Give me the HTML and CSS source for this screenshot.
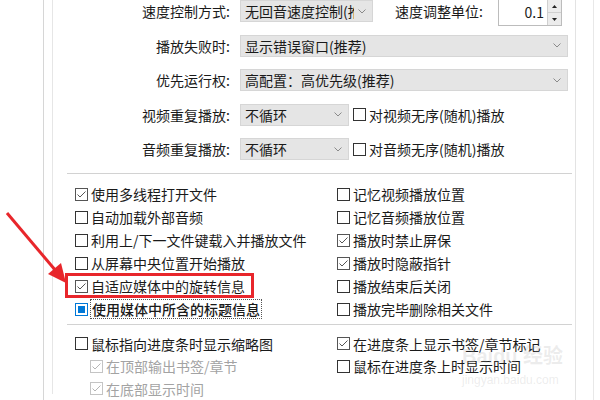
FILE: index.html
```html
<!DOCTYPE html>
<html lang="zh-CN">
<head>
    <meta charset="UTF-8">
    <title>播放设置</title>
    <link rel="stylesheet" href="styles.css">
</head>
<body>
    <div class="window">
        <div class="gutter"></div>
        <div class="pane">
            <div class="content">
                <div class="options">
                    <div class="row">
                        <span class="label">速度控制方式:</span>
                        <div class="select short"><span class="value">无回音速度控制(推荐)</span><svg class="chev" viewBox="0 0 8 5"><polyline points="0.5,0.5 4,4 7.5,0.5"/></svg></div>
                        <span class="spin-label">速度调整单位:</span>
                        <div class="spin">
                            <span class="spin-value">0.1</span>
                            <div class="spin-btns">
                                <span class="spin-btn"><svg viewBox="0 0 5 3"><polygon points="2.5,0 5,3 0,3"/></svg></span>
                                <span class="spin-btn"><svg viewBox="0 0 5 3"><polygon points="0,0 5,0 2.5,3"/></svg></span>
                            </div>
                        </div>
                    </div>
                    <div class="row">
                        <span class="label">播放失败时:</span>
                        <div class="select wide"><span class="value">显示错误窗口(推荐)</span><svg class="chev" viewBox="0 0 8 5"><polyline points="0.5,0.5 4,4 7.5,0.5"/></svg></div>
                    </div>
                    <div class="row">
                        <span class="label">优先运行权:</span>
                        <div class="select wide"><span class="value">高配置：高优先级(推荐)</span><svg class="chev" viewBox="0 0 8 5"><polyline points="0.5,0.5 4,4 7.5,0.5"/></svg></div>
                    </div>
                    <div class="row">
                        <span class="label">视频重复播放:</span>
                        <div class="select tiny"><span class="value">不循环</span><svg class="chev" viewBox="0 0 8 5"><polyline points="0.5,0.5 4,4 7.5,0.5"/></svg></div>
                        <label class="check inline"><span class="box"></span>对视频无序(随机)播放</label>
                    </div>
                    <div class="row">
                        <span class="label">音频重复播放:</span>
                        <div class="select tiny"><span class="value">不循环</span><svg class="chev" viewBox="0 0 8 5"><polyline points="0.5,0.5 4,4 7.5,0.5"/></svg></div>
                        <label class="check inline"><span class="box"></span>对音频无序(随机)播放</label>
                    </div>
                </div>

                <div class="sep first"></div>

                <div class="checks">
                    <label class="check"><span class="box on"><svg viewBox="0 0 11 11"><polyline points="1.5,5.5 4,8 9.5,2.5"/></svg></span>使用多线程打开文件</label>
                    <label class="check"><span class="box"></span>记忆视频播放位置</label>
                    <label class="check"><span class="box"></span>自动加载外部音频</label>
                    <label class="check"><span class="box"></span>记忆音频播放位置</label>
                    <label class="check"><span class="box"></span>利用上/下一文件键载入并播放文件</label>
                    <label class="check"><span class="box on"><svg viewBox="0 0 11 11"><polyline points="1.5,5.5 4,8 9.5,2.5"/></svg></span>播放时禁止屏保</label>
                    <label class="check"><span class="box"></span>从屏幕中央位置开始播放</label>
                    <label class="check"><span class="box on"><svg viewBox="0 0 11 11"><polyline points="1.5,5.5 4,8 9.5,2.5"/></svg></span>播放时隐蔽指针</label>
                    <label class="check"><span class="box on"><svg viewBox="0 0 11 11"><polyline points="1.5,5.5 4,8 9.5,2.5"/></svg></span>自适应媒体中的旋转信息</label>
                    <label class="check"><span class="box"></span>播放结束后关闭</label>
                    <label class="check"><span class="box mixed"><span class="fill"></span></span><span class="focus">使用媒体中所含的标题信息</span></label>
                    <label class="check"><span class="box"></span>播放完毕删除相关文件</label>
                </div>

                <div class="sep"></div>

                <div class="checks tight">
                    <label class="check"><span class="box"></span>鼠标指向进度条时显示缩略图</label>
                    <label class="check"><span class="box on"><svg viewBox="0 0 11 11"><polyline points="1.5,5.5 4,8 9.5,2.5"/></svg></span>在进度条上显示书签/章节标记</label>
                    <label class="check sub off"><span class="box on"><svg viewBox="0 0 11 11"><polyline points="1.5,5.5 4,8 9.5,2.5"/></svg></span>在顶部输出书签/章节</label>
                    <label class="check"><span class="box"></span>鼠标在进度条上时显示时间</label>
                    <label class="check sub off"><span class="box on"><svg viewBox="0 0 11 11"><polyline points="1.5,5.5 4,8 9.5,2.5"/></svg></span>在底部显示时间</label>
                </div>
            </div>
        </div>
        <div class="rail"></div>
    </div>

    <!-- annotation drawn over the dialog -->
    <svg class="arrow" width="80" height="300" viewBox="0 0 80 300">
        <line x1="7" y1="213" x2="56" y2="271" />
        <polygon points="66,283 48,274 61,263" />
    </svg>
    <div class="highlight"></div>

    <div class="watermark">
        <div class="wm-top">Bai<span class="wm-paw">d</span>u 经验</div>
        <div class="wm-url">jingyan.baidu.com</div>
    </div>
</body>
</html>
```

FILE: styles.css
```css
body {
    margin: 0;
    width: 600px;
    height: 400px;
    overflow: hidden;
    position: relative;
    background-color: #fff;
    color: #1a1a1a;
    font-family: "Noto Sans CJK SC", "Microsoft YaHei", sans-serif;
    font-size: 14px;
}
.window {
    display: flex;
    height: 400px;
}
.gutter {
    width: 43px;
    border-right: 1px solid #d6d6d6;
}
.pane {
    flex: 0 0 532px;
    box-sizing: border-box;
    padding-left: 8px;
    border-right: 1px solid #e3e3e3;
}
.content {
    height: 100%;
    border-left: 1px solid #e6e6e6;
}
.rail {
    width: 17px;
    border-right: 1px solid #e8e8e8;
}

/* combo rows */
.options {
    margin-top: -6px;
}
.row {
    display: flex;
    align-items: center;
    height: 34.5px;
}
.label {
    width: 177px;
    text-align: right;
    white-space: nowrap;
}
.select {
    box-sizing: border-box;
    height: 22px;
    margin-left: 10px;
    display: flex;
    align-items: center;
    background-color: #e5e5e5;
    border: 1px solid #d6d6d6;
    padding-left: 4px;
    position: relative;
    overflow: hidden;
}
.select .value {
    flex: 1;
    white-space: nowrap;
    overflow: hidden;
    line-height: 20px;
}
.select .chev {
    width: 8px;
    height: 5px;
    margin: 0 6px 0 4px;
    flex: none;
}
.chev polyline {
    fill: none;
    stroke: #8a8a8a;
    stroke-width: 1;
}
.short { width: 133px; }
.wide { width: 328px; }
.tiny { width: 109px; }

.spin-label {
    margin-left: 22px;
    white-space: nowrap;
}
.spin {
    display: flex;
    margin-left: 15px;
    height: 27px;
    margin-top: 3px;
    box-sizing: border-box;
    border: 1px solid #bcbcbc;
    background-color: #fff;
}
.spin-value {
    width: 48px;
    text-align: right;
    padding-right: 3px;
    line-height: 25px;
    box-sizing: border-box;
}
.spin-btns {
    width: 13px;
    display: flex;
    flex-direction: column;
    border-left: 1px solid #d0d0d0;
}
.spin-btn {
    flex: 1;
    display: flex;
    align-items: center;
    justify-content: center;
    background-color: #ececec;
}
.spin-btn + .spin-btn {
    border-top: 1px solid #d0d0d0;
}
.spin-btn svg {
    width: 5px;
    height: 3px;
    fill: #222;
}

/* checkboxes */
.check {
    display: flex;
    align-items: center;
    white-space: nowrap;
    height: 23px;
}
.check.inline {
    margin-left: 4px;
}
.box {
    box-sizing: border-box;
    width: 13px;
    height: 13px;
    border: 1px solid #333;
    background-color: #fff;
    margin-right: 3px;
    flex: none;
    display: flex;
    align-items: center;
    justify-content: center;
}
.box.on {
    border-color: #555;
}
.box svg {
    width: 11px;
    height: 11px;
}
.box polyline {
    fill: none;
    stroke: #555;
    stroke-width: 1;
}
.box.mixed {
    border-color: #0078d7;
}
.box.mixed .fill {
    width: 7px;
    height: 7px;
    background-color: #0078d7;
}
.focus {
    border: 1px dotted #555;
    padding: 0 1px;
    line-height: 18px;
    font-weight: 500;
    margin-left: -1px;
}
.check.off {
    color: #a3a3a3;
}
.check.off .box {
    border-color: #c4c4c4;
}
.check.off polyline {
    stroke: #b5b5b5;
}
.check.sub {
    margin-left: 15px;
    height: 22.5px;
}

.sep {
    height: 1px;
    background-color: #d2d2d2;
    margin: 3px 3px 0 14px;
}
.sep.first {
    margin-top: 6px;
}
.checks {
    display: grid;
    grid-template-columns: 262px 1fr;
    padding: 9px 0 0 22px;
}
.checks.tight {
    padding-top: 8px;
}
.checks.tight .check {
    height: 22.5px;
}

/* annotation overlay */
.arrow {
    position: absolute;
    left: 0;
    top: 0;
}
.arrow line {
    stroke: #e8262b;
    stroke-width: 3;
}
.arrow polygon {
    fill: #e8262b;
}
.highlight {
    position: absolute;
    left: 65px;
    top: 273px;
    width: 189px;
    height: 25px;
    box-sizing: border-box;
    border: 3px solid #e8262b;
}

.watermark {
    position: absolute;
    left: 462px;
    top: 344px;
    color: rgba(170, 170, 170, 0.22);
    font-family: "Liberation Sans", "Noto Sans CJK SC", sans-serif;
}
.wm-top {
    font-size: 20px;
    font-weight: bold;
    line-height: 24px;
}
.wm-url {
    font-size: 12px;
    line-height: 14px;
    margin-top: 5px;
}
```
